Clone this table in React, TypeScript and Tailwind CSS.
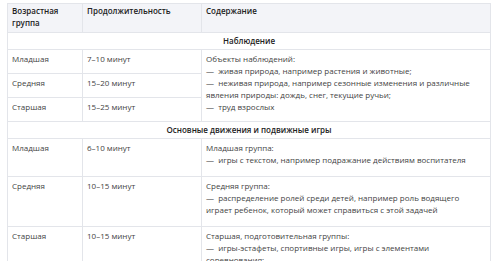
import React from "react";

const td = "border border-[#e3e5ea] align-top px-[4px] pt-[3px] pb-[10px]";
const tdA = "border border-[#e3e5ea] align-top px-[4px] pt-[3px] pb-[8px]";
const tdC = "border border-[#e3e5ea] align-top px-[4px] pt-[3px] pb-[5px]";
const sec = "border border-[#e3e5ea] text-center font-semibold text-[#222] pt-[2px] pb-[2px]";
const th = "border border-[#e3e5ea] text-left align-top font-semibold text-[#222] px-[4px] pt-[1px] pb-[3px]";
const D = "—\u00a0 ";

export default function App() {
  return (
    <div
      className="bg-white pl-[7px] pt-[3px] text-[8px] leading-[12px] text-[#434343]"
      style={{ fontFamily: '"Open Sans", "Liberation Sans", sans-serif' }}
    >
      <table className="w-[483px] border-collapse table-fixed">
        <colgroup>
          <col className="w-[75px]" />
          <col className="w-[119px]" />
          <col className="w-[289px]" />
        </colgroup>
        <thead>
          <tr className="bg-[#f3f4f8]">
            <th className={th}>
              Возрастная
              <br />
              группа
            </th>
            <th className={th}>Продолжительность</th>
            <th className={th}>Содержание</th>
          </tr>
        </thead>
        <tbody>
          <tr>
            <td colSpan={3} className={sec}>
              Наблюдение
            </td>
          </tr>
          <tr>
            <td className={tdA}>Младшая</td>
            <td className={tdA}>7–10 минут</td>
            <td className={tdC + " whitespace-nowrap"} rowSpan={3}>
              Объекты наблюдений:
              <br />
              {D}живая природа, например растения и животные;
              <br />
              {D}неживая природа, например сезонные изменения и различные
              <br />
              явления природы: дождь, снег, текущие ручьи;
              <br />
              {D}труд взрослых
            </td>
          </tr>
          <tr>
            <td className={tdA}>Средняя</td>
            <td className={tdA}>15–20 минут</td>
          </tr>
          <tr>
            <td className={tdA}>Старшая</td>
            <td className={tdA}>15–25 минут</td>
          </tr>
          <tr>
            <td colSpan={3} className={sec}>
              Основные движения и подвижные игры
            </td>
          </tr>
          <tr>
            <td className={td}>Младшая</td>
            <td className={td}>6–10 минут</td>
            <td className={td + " whitespace-nowrap"}>
              Младшая группа:
              <br />
              {D}игры с текстом, например подражание действиям воспитателя
            </td>
          </tr>
          <tr>
            <td className={td}>Средняя</td>
            <td className={td}>10–15 минут</td>
            <td className={td + " whitespace-nowrap"}>
              Средняя группа:
              <br />
              {D}распределение ролей среди детей, например роль водящего
              <br />
              играет ребенок, который может справиться с этой задачей
            </td>
          </tr>
          <tr>
            <td className={td}>Старшая</td>
            <td className={td}>10–15 минут</td>
            <td className={td + " whitespace-nowrap"}>
              Старшая, подготовительная группы:
              <br />
              {D}игры-эстафеты, спортивные игры, игры с элементами
              <br />
              соревнования;
              <br />
              {D}игры с правилами
            </td>
          </tr>
        </tbody>
      </table>
    </div>
  );
}
